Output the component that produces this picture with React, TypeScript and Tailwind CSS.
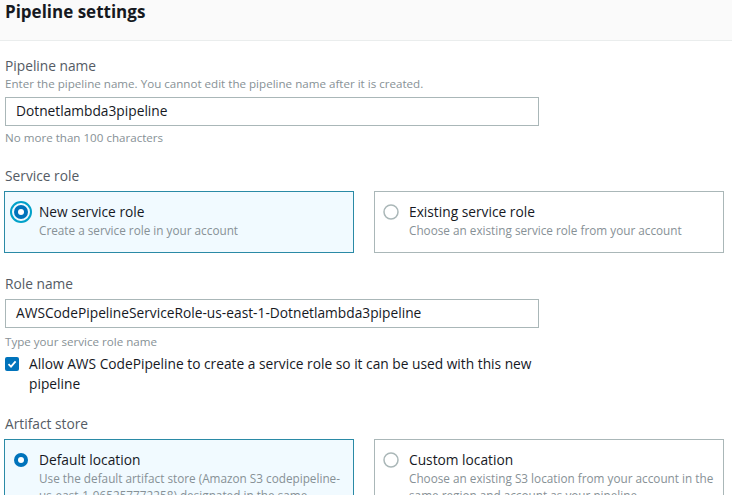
import React from "react";

function Radio({ checked, focused }: { checked: boolean; focused?: boolean }) {
    if (!checked) {
        return (
            <svg width="16" height="16" viewBox="0 0 16 16" className="shrink-0">
                <circle cx="8" cy="8" r="7" fill="white" stroke="#aab7b8" strokeWidth="1.5" />
            </svg>
        );
    }
    return (
        <svg width="22" height="22" viewBox="0 0 22 22" className="shrink-0">
            {focused && <circle cx="11" cy="11" r="10" fill="none" stroke="#00a1c9" strokeWidth="2" />}
            <circle cx="11" cy="11" r="7" fill="#0073bb" />
            <circle cx="11" cy="11" r="3" fill="white" />
        </svg>
    );
}

function Tile({
    title,
    desc,
    checked,
    focused,
}: {
    title: string;
    desc: string[];
    checked: boolean;
    focused?: boolean;
}) {
    return (
        <div
            className={`border pt-[9px] pb-[13px] pl-[5px] pr-[10px] ${
                checked ? "bg-[#f1faff] border-[#2a8aa6]" : "bg-white border-[#aab7b8]"
            }`}
        >
            <div className="flex items-start gap-[7px]">
                <div className="flex items-center justify-center w-[22px] h-[22px] shrink-0">
                    <Radio checked={checked} focused={focused} />
                </div>
                <div className="pt-px">
                    <div className="text-[13.75px] leading-[20px] text-[#16191f]">{title}</div>
                    {desc.map((line, i) => (
                        <div key={i} className="text-[11.75px] leading-[17px] text-[#879196] whitespace-nowrap">
                            {line}
                        </div>
                    ))}
                </div>
            </div>
        </div>
    );
}

export default function App() {
    return (
        <div
            className="w-[732px] h-[495px] overflow-hidden bg-white"
            style={{ fontFamily: '"Open Sans", "Noto Sans", sans-serif' }}
        >
            <header className="h-[41px] bg-[#fafafa] border-b border-[#eaeded] px-[5px] flex items-start">
                <h2 className="text-[17px] leading-[24px] font-bold text-[#16191f]">Pipeline settings</h2>
            </header>

            <main className="pl-[4px] pr-[8px] pt-[15px]">
                <div className="pl-px">
                    <div className="text-[13.75px] leading-[20px] text-[#545b64]">Pipeline name</div>
                    <div className="text-[11.6px] leading-[16px] text-[#879196]">
                        Enter the pipeline name. You cannot edit the pipeline name after it is created.
                    </div>
                    <div className="mt-[5px] w-[534px] h-[29px] border border-[#aab7b8] px-[10px] flex items-center text-[13.75px] text-[#16191f]">
                        Dotnetlambda3pipeline
                    </div>
                    <div className="mt-[4px] text-[11.6px] leading-[16px] text-[#879196]">No more than 100 characters</div>

                    <div className="mt-[20px] text-[13.75px] leading-[20px] text-[#545b64]">Service role</div>
                </div>
                <div className="mt-[5px] grid grid-cols-2 gap-[20px] w-[720px]">
                    <Tile title="New service role" desc={["Create a service role in your account"]} checked focused />
                    <Tile
                        title="Existing service role"
                        desc={["Choose an existing service role from your account"]}
                        checked={false}
                    />
                </div>

                <div className="pl-px">
                    <div className="mt-[21px] text-[13.75px] leading-[20px] text-[#545b64]">Role name</div>
                    <div className="mt-[5px] w-[534px] h-[29px] border border-[#aab7b8] px-[10px] flex items-center text-[13.75px] text-[#16191f]">
                        AWSCodePipelineServiceRole-us-east-1-Dotnetlambda3pipeline
                    </div>
                    <div className="mt-[6px] text-[11.6px] leading-[16px] text-[#879196]">Type your service role name</div>

                    <label className="mt-[4px] flex items-start gap-[10px]">
                        <span className="mt-[3px] w-[14px] h-[14px] rounded-[2px] bg-[#0073bb] flex items-center justify-center shrink-0">
                            <svg width="10" height="10" viewBox="0 0 10 10">
                                <path d="M1.5 5.2 L4 7.6 L8.6 2.4" fill="none" stroke="white" strokeWidth="1.8" />
                            </svg>
                        </span>
                        <span className="w-[515px] text-[13.75px] leading-[20px] text-[#16191f]">
                            Allow AWS CodePipeline to create a service role so it can be used with this new pipeline
                        </span>
                    </label>

                    <div className="mt-[20px] text-[13.75px] leading-[20px] text-[#545b64]">Artifact store</div>
                </div>
                <div className="mt-[5px] grid grid-cols-2 gap-[20px] w-[720px]">
                    <Tile
                        title="Default location"
                        desc={[
                            "Use the default artifact store (Amazon S3 codepipeline-",
                            "us-east-1-965257772258) designated in the same",
                            "region and account as your pipeline.",
                        ]}
                        checked
                    />
                    <Tile
                        title="Custom location"
                        desc={[
                            "Choose an existing S3 location from your account in the",
                            "same region and account as your pipeline.",
                        ]}
                        checked={false}
                    />
                </div>
            </main>
        </div>
    );
}
